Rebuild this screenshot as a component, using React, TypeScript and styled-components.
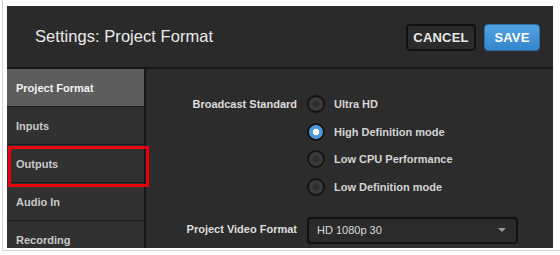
import React from "react";
import styled, { createGlobalStyle } from "styled-components";

const Global = createGlobalStyle`
  html, body { margin: 0; padding: 0; background: #ffffff; }
  body { font-family: "Liberation Sans", Arial, sans-serif; }
`;

const Frame = styled.div`
  margin-left: 2px;
  width: 552px;
  padding: 6px 2px 2px 4px;
  border: 1px solid #d4d4d4;
  border-top: none;
  box-shadow: 1px 1px 2px rgba(0, 0, 0, 0.12);
`;

const Panel = styled.div`
  width: 546px;
  height: 242px;
  background: #2c2c2c;
  display: flex;
  flex-direction: column;
  overflow: hidden;
`;

const Header = styled.header`
  height: 61px;
  flex: none;
  display: flex;
  align-items: center;
  justify-content: space-between;
  padding: 0 13px 0 28px;
  background: #2a2a2a;
  border-bottom: 2px solid #161616;
`;

const Title = styled.h1`
  margin: 0;
  font-size: 16.5px;
  font-weight: normal;
  color: #ececec;
  letter-spacing: 0.05px;
`;

const Actions = styled.div`
  display: flex;
  gap: 8px;
  margin-top: 2px;
`;

const Button = styled.button<{ $primary?: boolean }>`
  height: 27px;
  padding: 0;
  width: ${(p) => (p.$primary ? "56px" : "70px")};
  border-radius: 4px;
  font-family: "Liberation Sans", Arial, sans-serif;
  font-weight: bold;
  font-size: 13px;
  letter-spacing: 0.2px;
  color: ${(p) => (p.$primary ? "#ffffff" : "#e8e8e8")};
  background: ${(p) =>
    p.$primary ? "linear-gradient(#52a3e4, #3585cc)" : "#2b2b2b"};
  border: ${(p) => (p.$primary ? "1px solid #2b6ea8" : "2px solid #111111")};
`;

const Body = styled.div`
  flex: 1;
  display: flex;
  min-height: 0;
`;

const Sidebar = styled.nav`
  width: 137px;
  flex: none;
  background: #303030;
  border-right: 2px solid #181818;
  display: flex;
  flex-direction: column;
`;

const NavItem = styled.div<{ $active?: boolean }>`
  position: relative;
  height: 37px;
  flex: none;
  display: flex;
  align-items: center;
  padding-left: 9px;
  border-bottom: 1px solid #1a1a1a;
  background: ${(p) => (p.$active ? "#5d5d5d" : "#313131")};
  color: ${(p) => (p.$active ? "#f2f2f2" : "#c9c9c9")};
  font-size: 11px;
  font-weight: bold;
`;

const Highlight = styled.span`
  position: absolute;
  z-index: 2;
  top: 1px;
  left: 1px;
  width: 135px;
  height: 35px;
  border: 3px solid #e8000b;
  pointer-events: none;
`;

const Content = styled.section`
  flex: 1;
  padding-top: 21px;
`;

const Form = styled.div`
  display: grid;
  grid-template-columns: 151px 1fr;
  column-gap: 10px;
  row-gap: 15px;
  align-items: start;
`;

const Label = styled.div<{ $h: number }>`
  height: ${(p) => p.$h}px;
  line-height: ${(p) => p.$h}px;
  text-align: right;
  color: #dedede;
  font-size: 11px;
  font-weight: bold;
`;

const RadioGroup = styled.div`
  display: flex;
  flex-direction: column;
`;

const RadioRow = styled.div`
  height: 27.7px;
  display: flex;
  align-items: center;
  gap: 9px;
  color: #d4d4d4;
  font-size: 11px;
  font-weight: bold;
`;

const Radio = styled.span<{ $checked?: boolean }>`
  width: 14px;
  height: 14px;
  flex: none;
  border-radius: 50%;
  border: 2px solid #141414;
  background: ${(p) =>
    p.$checked
      ? "radial-gradient(circle, #ffffff 0 3px, #4b9be0 3.6px)"
      : "radial-gradient(circle, #2e2e2e 0 3px, #3b3b3b 4px)"};
`;

const Select = styled.div`
  box-sizing: content-box;
  width: 189px;
  height: 23px;
  margin-top: 1px;
  padding: 0 10px 0 8px;
  border: 2px solid #111111;
  border-radius: 4px;
  background: #2b2b2b;
  display: flex;
  align-items: center;
  justify-content: space-between;
  color: #dcdcdc;
  font-size: 11px;
`;

const Caret = styled.span`
  width: 0;
  height: 0;
  border-left: 4px solid transparent;
  border-right: 4px solid transparent;
  border-top: 4px solid #9a9a9a;
`;

const navItems = ["Project Format", "Inputs", "Outputs", "Audio In", "Recording"];
const standards = [
  "Ultra HD",
  "High Definition mode",
  "Low CPU Performance",
  "Low Definition mode",
];

export default function App() {
  return (
    <>
      <Global />
      <Frame>
        <Panel>
          <Header>
            <Title>Settings: Project Format</Title>
            <Actions>
              <Button>CANCEL</Button>
              <Button $primary>SAVE</Button>
            </Actions>
          </Header>
          <Body>
            <Sidebar>
              {navItems.map((item, i) => (
                <NavItem key={item} $active={i === 0}>
                  {item}
                  {item === "Outputs" && <Highlight />}
                </NavItem>
              ))}
            </Sidebar>
            <Content>
              <Form>
                <Label $h={28}>Broadcast Standard</Label>
                <RadioGroup>
                  {standards.map((s, i) => (
                    <RadioRow key={s}>
                      <Radio $checked={i === 1} />
                      {s}
                    </RadioRow>
                  ))}
                </RadioGroup>
                <Label $h={27}>Project Video Format</Label>
                <Select>
                  HD 1080p 30
                  <Caret />
                </Select>
              </Form>
            </Content>
          </Body>
        </Panel>
      </Frame>
    </>
  );
}
